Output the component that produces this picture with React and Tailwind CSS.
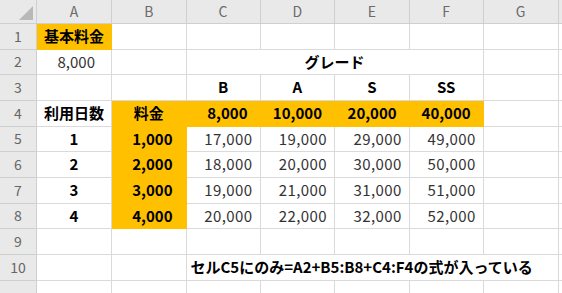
import React from 'react';

const ORANGE = 'bg-[#ffc000] border-[#ffc000]';

// one entry per cell of columns A..H; span and fill where needed
const rows = [
  [{ t: '基本料金', c: 'justify-center font-bold', fill: true }, {}, {}, {}, {}, {}, {}, {}],
  [{ t: '8,000', c: 'justify-end pr-[16px] text-[#333]' }, {}, { t: 'グレード', c: 'justify-center font-bold', span: 'col-span-4' }, {}, {}],
  [{}, {}, { t: 'B', c: 'justify-center font-bold' }, { t: 'A', c: 'justify-center font-bold' }, { t: 'S', c: 'justify-center font-bold' }, { t: 'SS', c: 'justify-center font-bold' }, {}, {}],
  [
    { t: '利用日数', c: 'justify-center font-bold' },
    { t: '料金', c: 'justify-center font-bold', fill: true },
    { t: '8,000', c: 'justify-end pr-[12px] font-bold', fill: true },
    { t: '10,000', c: 'justify-end pr-[12px] font-bold', fill: true },
    { t: '20,000', c: 'justify-end pr-[12px] font-bold', fill: true },
    { t: '40,000', c: 'justify-end pr-[12px] font-bold', fill: true },
    {}, {},
  ],
  ...[
    ['1', '1,000', '17,000', '19,000', '29,000', '49,000'],
    ['2', '2,000', '18,000', '20,000', '30,000', '50,000'],
    ['3', '3,000', '19,000', '21,000', '31,000', '51,000'],
    ['4', '4,000', '20,000', '22,000', '32,000', '52,000'],
  ].map(([n, fee, ...vals]) => [
    { t: n, c: 'justify-center font-bold' },
    { t: fee, c: 'justify-end pr-[13px] font-bold', fill: true },
    ...vals.map(v => ({ t: v, c: 'justify-end pr-[7px] text-[#333] tracking-[0.4px]' })),
    {}, {},
  ]),
  [{}, {}, {}, {}, {}, {}, {}, {}],
  [{}, {}, { t: 'セルC5にのみ=A2+B5:B8+C4:F4の式が入っている', c: 'justify-start pl-[4px] font-bold whitespace-nowrap', span: 'col-span-5' }, {}],
  [{}, {}, {}, {}, {}, {}, {}, {}],
];

// H is only a sliver at the right edge, so its letter is off screen
const letters = ['A', 'B', 'C', 'D', 'E', 'F', 'G', ''];

export default function App() {
  return (
    <div
      className="w-[562px] h-[293px] overflow-hidden bg-white text-[15px] text-black"
      style={{ fontFamily: '"Noto Sans CJK JP", "Noto Sans", sans-serif' }}
    >
      <div className="grid grid-cols-[37px_75px_74.5px_74px_74.5px_74.7px_74px_75px_40px] grid-rows-[24px_repeat(11,25.67px)]">
        {/* corner */}
        <div className="relative bg-[#e9e9e9] border-r border-b border-[#cfcfcf]">
          <div className="absolute right-[3px] bottom-[3px] w-0 h-0 border-l-[14px] border-l-transparent border-b-[14px] border-b-[#b8b8b8]" />
        </div>
        {letters.map((l, k) => (
          <div key={k} className="flex items-center justify-center bg-[#e9e9e9] border-r border-b border-[#cfcfcf] text-[14px] text-[#6b6b6b]">
            {l}
          </div>
        ))}
        {rows.map((row, i) => (
          <React.Fragment key={i}>
            <div className="flex items-center justify-center bg-[#e9e9e9] border-r border-b border-[#cfcfcf] text-[14px] text-[#666]">
              {i < 10 ? i + 1 : ''}
            </div>
            {row.map((cell, j) => (
              <div
                key={j}
                className={`flex items-center border-r border-b ${cell.fill ? ORANGE : 'border-[#dadada]'} ${cell.span || ''} ${cell.c || ''}`}
              >
                {cell.t}
              </div>
            ))}
          </React.Fragment>
        ))}
      </div>
    </div>
  );
}
